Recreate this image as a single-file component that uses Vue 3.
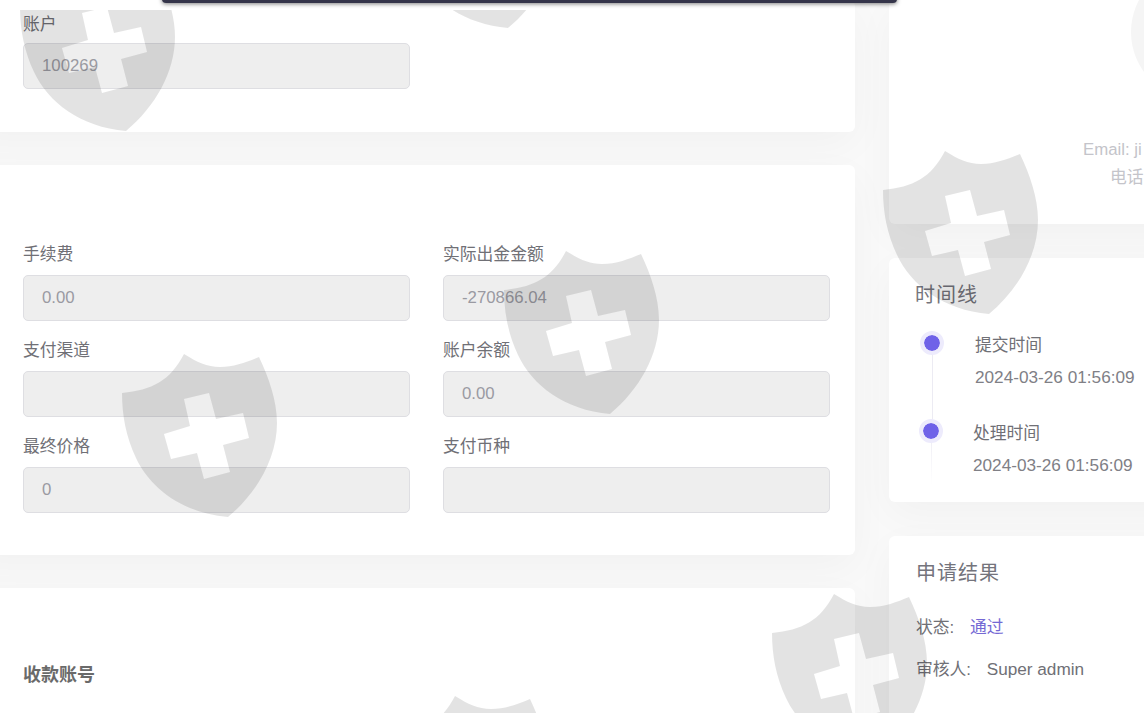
<script setup>
const leftTop = [
  { label: "手续费", value: "0.00" },
  { label: "实际出金金额", value: "-270866.04" },
  { label: "支付渠道", value: "" },
  { label: "账户余额", value: "0.00" },
  { label: "最终价格", value: "0" },
  { label: "支付币种", value: "" },
];

const timeline = [
  { title: "提交时间", time: "2024-03-26 01:56:09" },
  { title: "处理时间", time: "2024-03-26 01:56:09" },
];

// 水印位置
const marks = [
  { x: 20, y: -43 },
  { x: 402, y: -146 },
  { x: 122, y: 343 },
  { x: 504, y: 240 },
  { x: 883, y: 140 },
  { x: 393, y: 685 },
  { x: 772, y: 583 },
];
</script>

<template>
  <div class="page">
    <div class="main">
      <div class="left">
        <section class="card card-account">
          <div class="field">
            <label>账户</label>
            <div class="input">100269</div>
          </div>
        </section>

        <section class="card card-pay">
          <div class="grid">
            <div v-for="item in leftTop" :key="item.label" class="field">
              <label>{{ item.label }}</label>
              <div class="input">{{ item.value }}</div>
            </div>
          </div>
        </section>

        <section class="card card-bank">
          <h4>收款账号</h4>
        </section>
      </div>

      <div class="right">
        <section class="card card-user">
          <div class="avatar"></div>
          <p>Email: ji</p>
          <p class="phone">电话</p>
        </section>

        <section class="card card-time">
          <h4>时间线</h4>
          <ul class="timeline">
            <li v-for="item in timeline" :key="item.title">
              <span class="dot"></span>
              <div class="tl-title">{{ item.title }}</div>
              <div class="tl-time">{{ item.time }}</div>
            </li>
          </ul>
        </section>

        <section class="card card-result">
          <h4>申请结果</h4>
          <div class="row">状态: <span class="pass">通过</span></div>
          <div class="row">审核人: <span class="admin">Super admin</span></div>
        </section>
      </div>
    </div>

    <div class="watermarks">
      <svg
        v-for="(m, i) in marks"
        :key="i"
        class="mark"
        :style="{ left: m.x + 'px', top: m.y + 'px' }"
        width="156"
        height="166"
        viewBox="0 0 156 166"
      >
        <path
          fill-rule="evenodd"
          d="M62 1C75 9 85 14 98 14C112 14 125 9 137 4C147 25 155 48 155 70C155 105 135 140 106 164C60 160 28 135 14 105C4 84 0 62 0 40C30 37 48 28 62 1ZM62 46L68 73L42 81L49 106L75 100L82 126L108 119L101 92L127 85L121 60L94 66L87 40Z"
        />
      </svg>
    </div>

    <div class="top-bar"></div>
  </div>
</template>

<style scoped>
.page {
  position: relative;
  width: 1144px;
  height: 713px;
  overflow: hidden;
  background-color: #f9f9f9;
  font-family: "Liberation Sans", "Noto Sans CJK SC", sans-serif;
  color: #707076;
  font-size: 16.8px;
}

.main {
  display: flex;
  gap: 34px;
  margin-left: -30px;
}

.left {
  width: 885px;
  flex-shrink: 0;
  display: flex;
  flex-direction: column;
  gap: 33px;
}

.right {
  width: 620px;
  flex-shrink: 0;
  display: flex;
  flex-direction: column;
  gap: 34px;
}

.card {
  background-color: #fff;
  border-radius: 6px;
  box-sizing: border-box;
  box-shadow: 0 12px 40px rgba(0, 0, 0, 0.035);
}

.card-account {
  height: 132px;
  padding: 11px 445px 0 53px;
}

.card-account label {
  margin-top: 2px;
  margin-bottom: 7px;
}

.card-pay {
  height: 390px;
  padding: 78px 25px 0 53px;
}

.card-bank {
  height: 200px;
  padding: 77px 53px 0;
}

.card-bank h4 {
  margin: 0;
  font-size: 18px;
  line-height: 20px;
  font-weight: 700;
  color: #6a6a6a;
}

.grid {
  display: grid;
  grid-template-columns: 387px 387px;
  column-gap: 33px;
}

.field {
  height: 96px;
}

.field label {
  display: block;
  line-height: 23px;
  color: #707076;
}

.card-pay label {
  margin-bottom: 9px;
}

.input {
  height: 46px;
  box-sizing: border-box;
  padding: 0 18px;
  line-height: 44px;
  color: #9a9aa2;
  background-color: #eee;
  border: 1px solid #dedee2;
  border-radius: 5px;
}

.card-user {
  height: 224px;
  color: #c4c4ca;
}

.avatar {
  width: 136px;
  height: 136px;
  margin: -36px 0 38px 242px;
  border-radius: 50%;
  background-color: #f5f5f5;
}

.card-user p {
  margin: 0;
  padding-left: 194px;
  line-height: 24px;
  white-space: nowrap;
}

.card-user .phone {
  margin-top: 4px;
  padding-left: 221px;
}

.card-time {
  height: 244px;
  padding: 24px 0 0 26px;
}

.card-time h4,
.card-result h4 {
  margin: 0;
  font-size: 20px;
  line-height: 26px;
  font-weight: 400;
  letter-spacing: 1px;
  color: #74747c;
}

.timeline {
  list-style: none;
  margin: 0;
  padding: 26px 0 0 60px;
}

.timeline li {
  position: relative;
  height: 88px;
}

.timeline li:last-child {
  margin-left: -2px;
}

.timeline li::before {
  content: "";
  position: absolute;
  left: -43px;
  top: 9px;
  height: 88px;
  width: 1px;
  background-color: #ecebf3;
}

.timeline li:last-child::before {
  left: -42px;
  height: 54px;
  background: linear-gradient(#ecebf3, #fff);
}

.dot {
  position: absolute;
  left: -55px;
  top: -3px;
  width: 16px;
  height: 16px;
  border-radius: 50%;
  background-color: #6f62e8;
  border: 4px solid #edebfc;
  background-clip: padding-box;
}

.timeline li:last-child .dot {
  left: -54px;
}

.tl-title {
  line-height: 24px;
  color: #707076;
}

.tl-time {
  margin-top: 9px;
  font-size: 17.2px;
  line-height: 20px;
  color: #808086;
}

.card-result {
  height: 240px;
  padding: 24px 0 0 27px;
}

.card-result h4 {
  margin-bottom: 29px;
}

.row {
  margin-bottom: 15px;
  line-height: 26px;
}

.pass {
  margin-left: 11px;
  color: #7468d4;
}

.admin {
  margin-left: 11px;
  font-size: 17.2px;
}

.watermarks {
  position: absolute;
  left: 0;
  top: 10px;
  right: 0;
  bottom: 0;
  overflow: hidden;
  pointer-events: none;
}

.mark {
  position: absolute;
}

.mark path {
  fill: rgba(0, 0, 0, 0.11);
}

.top-bar {
  position: absolute;
  left: 162px;
  top: -10px;
  width: 735px;
  height: 13px;
  background-color: #35354a;
  border-radius: 4px;
  box-shadow: 0 1px 4px rgba(0, 0, 0, 0.5);
}
</style>
